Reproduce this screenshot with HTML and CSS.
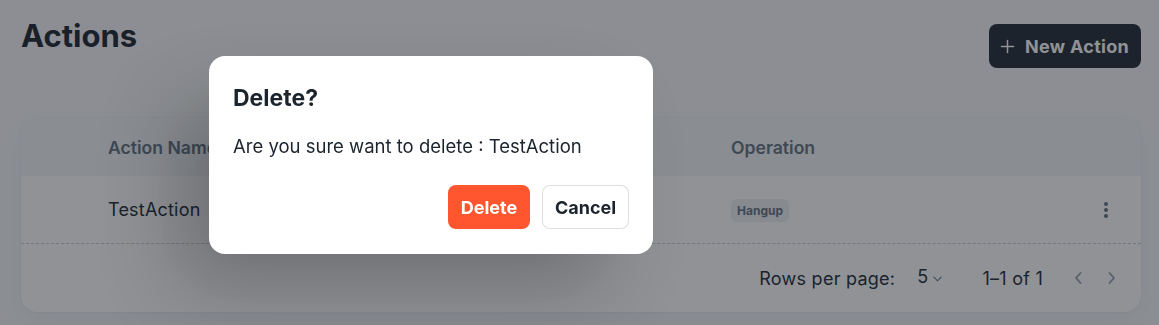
FILE: index.html
```html
<!DOCTYPE html>
<html>
<head>
<meta charset="utf-8">
<link rel="stylesheet" href="styles.css">
</head>
<body>
<div class="page">
  <div class="head">
    <h1 class="title">Actions</h1>
    <button class="new-btn">
      <svg class="plus" viewBox="0 0 16 16" width="16" height="16"><path d="M8 1.5v13M1.5 8h13" stroke="currentColor" stroke-width="1.6" stroke-linecap="round" fill="none"/></svg>
      <span>New Action</span>
    </button>
  </div>
  <div class="card">
    <div class="row thead">
      <div class="c-name">Action Name</div>
      <div class="c-op">Operation</div>
      <div class="c-more"></div>
    </div>
    <div class="row tbody">
      <div class="c-name">TestAction</div>
      <div class="c-op"><span class="chip">Hangup</span></div>
      <div class="c-more">
        <svg viewBox="0 0 6 18" width="6" height="18"><circle cx="3" cy="3" r="2" fill="currentColor"/><circle cx="3" cy="9" r="2" fill="currentColor"/><circle cx="3" cy="15" r="2" fill="currentColor"/></svg>
      </div>
    </div>
    <div class="foot">
      <span class="rpp">Rows per page:</span>
      <span class="sel">5
        <svg class="chev" viewBox="0 0 10 6" width="9" height="6"><path d="M1 1l4 4 4-4" stroke="currentColor" stroke-width="1.2" fill="none" stroke-linecap="round"/></svg>
      </span>
      <span class="range">1–1 of 1</span>
      <span class="nav">
        <svg viewBox="0 0 10 14" width="10" height="14"><path d="M7.5 2L3 7l4.5 5" stroke="currentColor" stroke-width="1.8" fill="none" stroke-linecap="round" stroke-linejoin="round"/></svg>
        <svg viewBox="0 0 10 14" width="10" height="14"><path d="M2.5 2L7 7l-4.5 5" stroke="currentColor" stroke-width="1.8" fill="none" stroke-linecap="round" stroke-linejoin="round"/></svg>
      </span>
    </div>
  </div>
</div>
<div class="backdrop"></div>
<div class="dialog">
  <h2 class="d-title">Delete?</h2>
  <p class="d-text">Are you sure want to delete : TestAction</p>
  <div class="d-actions">
    <button class="btn-del">Delete</button>
    <button class="btn-cancel">Cancel</button>
  </div>
</div>
</body>
</html>
```

FILE: styles.css
```css
* { box-sizing: border-box; }
html, body { margin: 0; padding: 0; }
body {
  width: 1159px;
  height: 325px;
  overflow: hidden;
  background: #f7f8f9;
  font-family: Inter, "Noto Sans", sans-serif;
  color: #212b36;
}
.page { padding: 18px 18px 0 21px; }
.head {
  display: flex;
  justify-content: space-between;
  align-items: flex-start;
  height: 100px;
}
.title {
  margin: 0;
  font-size: 31px;
  line-height: 36px;
  font-weight: 700;
  letter-spacing: 0;
  color: #1c252e;
}
.new-btn {
  margin-top: 6px;
  height: 44px;
  width: 152px;
  border: 0;
  border-radius: 8px;
  background: #212b36;
  color: #fff;
  font-family: inherit;
  font-size: 18px;
  letter-spacing: 0.3px;
  font-weight: 700;
  display: flex;
  align-items: center;
  gap: 10px;
  padding: 0 0 0 11px;
}
.plus { width: 15px; height: 15px; }
.card {
  background: #fff;
  border-radius: 16px;
  box-shadow: 0 0 2px rgba(145,158,171,0.2), 0 12px 24px -4px rgba(145,158,171,0.12);
  overflow: hidden;
}
.row { display: flex; align-items: center; }
.thead {
  height: 58px;
  background: #f4f6f8;
  color: #637381;
  font-size: 17.6px;
  font-weight: 600;
}
.tbody {
  height: 68px;
  font-size: 18px;
  letter-spacing: 0.2px;
  border-bottom: 1px dashed rgba(145,158,171,0.5);
}
.c-name { width: 710px; padding-left: 87px; }
.c-op { flex: 1; }
.c-more { width: 70px; display: flex; justify-content: center; color: #637381; padding-right: 0; }
.chip {
  display: inline-flex;
  align-items: center;
  height: 23px;
  padding: 0 6px;
  border-radius: 6px;
  background: rgba(145,158,171,0.16);
  color: #637381;
  font-size: 12px;
  letter-spacing: 0;
  font-weight: 700;
}
.foot {
  height: 68px;
  display: flex;
  align-items: center;
  justify-content: flex-end;
  font-size: 18px;
  letter-spacing: 0.25px;
  padding-right: 24px;
}
.rpp { margin-right: 22px; }
.sel { display: inline-flex; align-items: center; gap: 5px; margin-right: 40px; position: relative; top: -2px; }
.chev { color: #637381; margin-top: 5px; }
.range { margin-right: 30px; }
.nav { display: inline-flex; gap: 24px; color: #919eab; }
.backdrop {
  position: fixed;
  inset: 0;
  background: rgba(22,28,36,0.48);
}
.dialog {
  position: fixed;
  left: 209px;
  top: 56px;
  width: 444px;
  height: 198px;
  background: #fff;
  border-radius: 16px;
  padding: 28px 24px 24px 24px;
  box-shadow: -40px 40px 80px -8px rgba(0,0,0,0.24);
}
.d-title {
  margin: 0;
  font-size: 23px;
  line-height: 28px;
  font-weight: 700;
  color: #1c252e;
}
.d-text {
  margin: 22px 0 0 0;
  font-size: 18.5px;
  line-height: 24px;
  color: #1c252e;
}
.d-actions {
  margin-top: 27px;
  display: flex;
  justify-content: flex-end;
  gap: 12px;
}
.btn-del, .btn-cancel {
  height: 44px;
  border-radius: 8px;
  font-family: inherit;
  font-size: 18px;
  font-weight: 700;
  padding: 0;
}
.btn-del {
  width: 82px;
  border: 0;
  background: #ff5630;
  color: #fff;
}
.btn-cancel {
  width: 87px;
  background: #fff;
  border: 1px solid rgba(145,158,171,0.32);
  color: #1c252e;
}
```
